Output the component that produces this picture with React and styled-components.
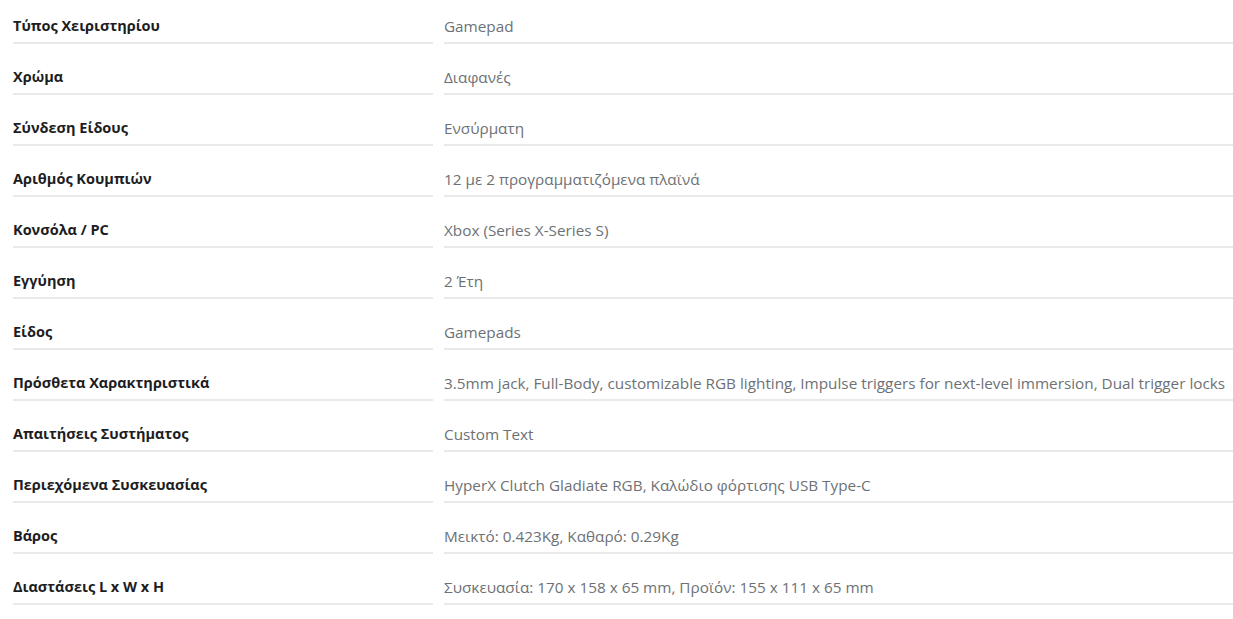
import React from 'react';
import styled, { createGlobalStyle } from 'styled-components';

const GlobalStyle = createGlobalStyle`
  body {
    margin: 0;
    background: #fff;
    font-family: "Open Sans", "Noto Sans", sans-serif;
  }
`;

const Specs = styled.dl`
  display: grid;
  grid-template-columns: 420px 1fr;
  column-gap: 11px;
  row-gap: 15px;
  margin: 0;
  padding: 8px 0 0 13px;
`;

const Cell = styled.div`
  padding: 8px 0 6px;
  line-height: 20px;
  border-bottom: 2px solid #e8e9ea;
  white-space: nowrap;
`;

const Label = styled(Cell).attrs({ as: 'dt' })`
  font-size: 14.5px;
  font-weight: 700;
  color: #1d1d1f;
`;

const Value = styled(Cell).attrs({ as: 'dd' })`
  margin: 0;
  font-size: 15.3px;
  font-weight: 400;
  color: #6d7176;
`;

const rows = [
  ['Τύπος Χειριστηρίου', 'Gamepad'],
  ['Χρώμα', 'Διαφανές'],
  ['Σύνδεση Είδους', 'Ενσύρματη'],
  ['Αριθμός Κουμπιών', '12 με 2 προγραμματιζόμενα πλαϊνά'],
  ['Κονσόλα / PC', 'Xbox (Series X-Series S)'],
  ['Εγγύηση', '2 Έτη'],
  ['Είδος', 'Gamepads'],
  ['Πρόσθετα Χαρακτηριστικά', '3.5mm jack, Full-Body, customizable RGB lighting, Impulse triggers for next-level immersion, Dual trigger locks'],
  ['Απαιτήσεις Συστήματος', 'Custom Text'],
  ['Περιεχόμενα Συσκευασίας', 'HyperX Clutch Gladiate RGB, Καλώδιο φόρτισης USB Type-C'],
  ['Βάρος', 'Μεικτό: 0.423Kg, Καθαρό: 0.29Kg'],
  ['Διαστάσεις L x W x H', 'Συσκευασία: 170 x 158 x 65 mm, Προϊόν: 155 x 111 x 65 mm'],
];

const App = () => {
  return (
    <>
      <GlobalStyle />
      <Specs>
        {rows.map(([label, value]) => (
          <React.Fragment key={label}>
            <Label>{label}</Label>
            <Value>{value}</Value>
          </React.Fragment>
        ))}
      </Specs>
    </>
  );
};

export default App;
